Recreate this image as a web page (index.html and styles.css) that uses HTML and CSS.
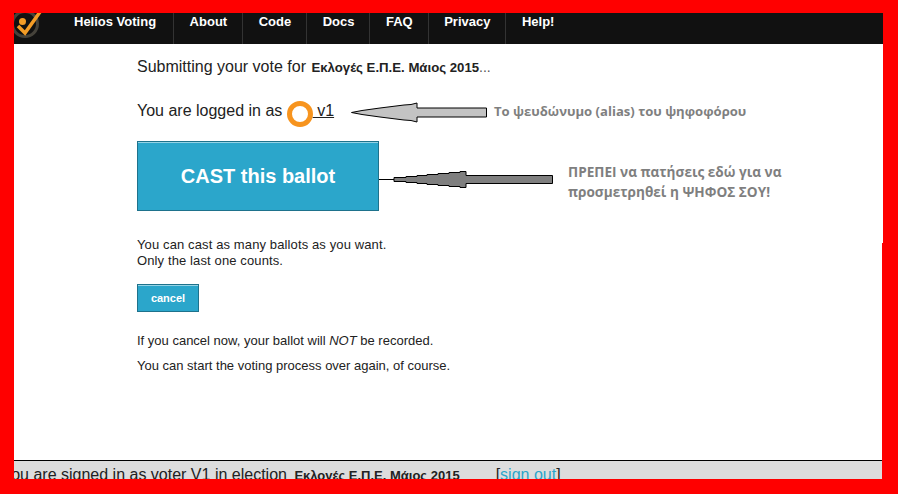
FILE: index.html
```html
<!DOCTYPE html>
<html lang="en">
<head>
    <meta charset="UTF-8">
    <title>Helios Voting</title>
    <link rel="stylesheet" href="styles.css">
</head>
<body>
    <div class="page">
        <nav class="topbar">
            <svg class="logo" width="36" height="31" viewBox="0 0 36 31">
                <circle cx="11" cy="11" r="12.5" fill="none" stroke="#45423a" stroke-width="3"/>
                <circle cx="8.5" cy="8.5" r="3.5" fill="#f39c26"/>
                <path d="M4 13 L11 20 L26 -1" fill="none" stroke="#f39c26" stroke-width="3.5"/>
            </svg>
            <a class="nav-item" href="#">Helios Voting</a>
            <a class="nav-item" href="#">About</a>
            <a class="nav-item" href="#">Code</a>
            <a class="nav-item" href="#">Docs</a>
            <a class="nav-item" href="#">FAQ</a>
            <a class="nav-item" href="#">Privacy</a>
            <a class="nav-item" href="#">Help!</a>
        </nav>

        <main class="content">
            <p class="title">Submitting your vote for <b class="election">Εκλογές Ε.Π.Ε. Μάιος 2015</b><span class="dots">...</span></p>
            <p class="logged-in">You are logged in as <span class="avatar"></span><a class="voter" href="#">&nbsp;v1</a></p>

            <button class="btn btn-cast" type="button">CAST this ballot</button>

            <p class="note first-note">You can cast as many ballots as you want.<br>Only the last one counts.</p>

            <button class="btn btn-cancel" type="button">cancel</button>

            <p class="note warn">If you cancel now, your ballot will <em>NOT</em> be recorded.</p>
            <p class="note">You can start the voting process over again, of course.</p>
        </main>

        <footer class="bottom">
            <span class="signed">You are signed in as voter V1 in election <b class="election-foot">Εκλογές Ε.Π.Ε. Μάιος 2015</b></span>
            <span class="signout">[<a href="#">sign out</a>]</span>
        </footer>

        <!-- annotations pasted on top of the screenshot -->
        <svg class="arrow arrow-alias" width="137" height="21" viewBox="0 0 137 21">
            <path d="M0.5 10.5 L11 8.5 L29 6 L53 3 L60 2.5 L66 1 V6 H135.5 V15 H66 V20 L60 18.5 L53 18 L29 15 L11 12.5 Z" fill="#c3c3c3" stroke="#000"/>
        </svg>
        <p class="annot annot-alias">Το ψευδώνυμο (alias) του ψηφοφόρου</p>

        <svg class="arrow arrow-cast" width="175" height="19" viewBox="0 0 175 19">
            <path d="M0 9.5 H15 V7.5 H27 V6.5 H38 V5.5 H48 V4.5 H59 V3.5 H70 V2.5 H81 V1.5 H87 V5.5 H173.5 V13.5 H87 V17.5 H81 V16.5 H70 V15.5 H59 V14.5 H48 V13.5 H38 V12.5 H27 V11.5 H15 V9.5 Z" fill="#7f7f7f" stroke="#000"/>
        </svg>
        <p class="annot annot-cast">ΠΡΕΠΕΙ να πατήσεις εδώ για να<br>προσμετρηθεί η ΨΗΦΟΣ ΣΟΥ!</p>

        <div class="edge-notch"></div>
    </div>
</body>
</html>
```

FILE: styles.css
```css
/* Basic Styles */
html, body {
    margin: 0;
    padding: 0;
    height: 100%;
}

body {
    background-color: #f00;
    font-family: 'Liberation Sans', Arial, sans-serif;
    color: #222;
    overflow: hidden;
}

.page {
    position: relative;
    box-sizing: border-box;
    height: 494px;
    padding: 13px 15px 15px 14px;
    display: flex;
    flex-direction: column;
}

/* Top bar */
.topbar {
    position: relative;
    display: flex;
    height: 31px;
    background-color: #111;
    overflow: hidden;
    flex-shrink: 0;
}

.logo {
    display: block;
    width: 36px;
    margin-right: 8.5px;
    flex-shrink: 0;
}

.nav-item {
    height: 31px;
    padding: 0 15px 0 15.5px;
    border-right: 1px solid #333;
    color: #fff;
    font-size: 13px;
    font-weight: bold;
    line-height: 17px;
    text-decoration: none;
}

.nav-item:first-of-type {
    padding-right: 17px;
}

.nav-item:last-child {
    border-right: none;
}

/* Main column */
.content {
    flex-grow: 1;
    background-color: #fff;
    padding-left: 123px;
    overflow: hidden;
}

.title {
    margin: 13px 0 0;
    font-size: 16px;
    line-height: 20px;
}

.election {
    font-size: 13.2px;
    margin-left: 1px;
}

.dots {
    font-size: 14px;
    color: #555;
}

.logged-in {
    margin: 17px 0 0;
    height: 32px;
    font-size: 16px;
    line-height: 20px;
    display: flex;
    align-items: center;
    white-space: pre;
}

.avatar {
    box-sizing: border-box;
    width: 26px;
    height: 26px;
    align-self: flex-end;
    border: 5px solid #f7941e;
    border-radius: 50%;
}

.voter {
    color: #222;
}

/* Buttons */
.btn {
    display: block;
    padding: 0;
    border: 1px solid #1e728c;
    box-shadow: inset 0 1px 0 rgba(255, 255, 255, 0.5);
    background-color: #2ba6cb;
    color: #fff;
    font-family: inherit;
    font-weight: bold;
}

.btn-cast {
    width: 242px;
    height: 70px;
    margin-top: 14px;
    font-size: 20px;
}

.btn-cancel {
    width: 62px;
    height: 28px;
    margin-top: 15px;
    font-size: 11px;
}

/* Notes */
.note {
    margin: 0;
    font-size: 13px;
    line-height: 16px;
}

.first-note {
    margin-top: 26px;
    letter-spacing: 0.12px;
}

.warn {
    margin-top: 21px;
    margin-bottom: 9px;
}

/* Footer */
.bottom {
    display: flex;
    height: 18px;
    border-top: 1px solid #000;
    background-color: #ddd;
    font-size: 16px;
    line-height: 27px;
    overflow: hidden;
    white-space: pre;
    flex-shrink: 0;
}

.signed {
    margin-left: -12px;
}

.election-foot {
    font-size: 13px;
    margin-left: 3px;
}

.signout {
    margin-left: 36px;
}

.signout a {
    color: #2ba6cb;
    text-decoration: underline;
}

/* Annotations */
.arrow {
    position: absolute;
    display: block;
}

.arrow-alias {
    left: 351px;
    top: 102px;
}

.arrow-cast {
    left: 379px;
    top: 170px;
}

.annot {
    position: absolute;
    margin: 0;
    color: #7f7f7f;
    font-family: 'Open Sans', sans-serif;
    font-weight: bold;
    line-height: 20px;
    white-space: nowrap;
}

.annot-alias {
    left: 494px;
    top: 101px;
    font-size: 13.1px;
}

.annot-cast {
    left: 568px;
    top: 162px;
    font-size: 13.6px;
}

.edge-notch {
    position: absolute;
    left: 882px;
    top: 243px;
    width: 1px;
    height: 236px;
    background-color: #f00;
}
```
